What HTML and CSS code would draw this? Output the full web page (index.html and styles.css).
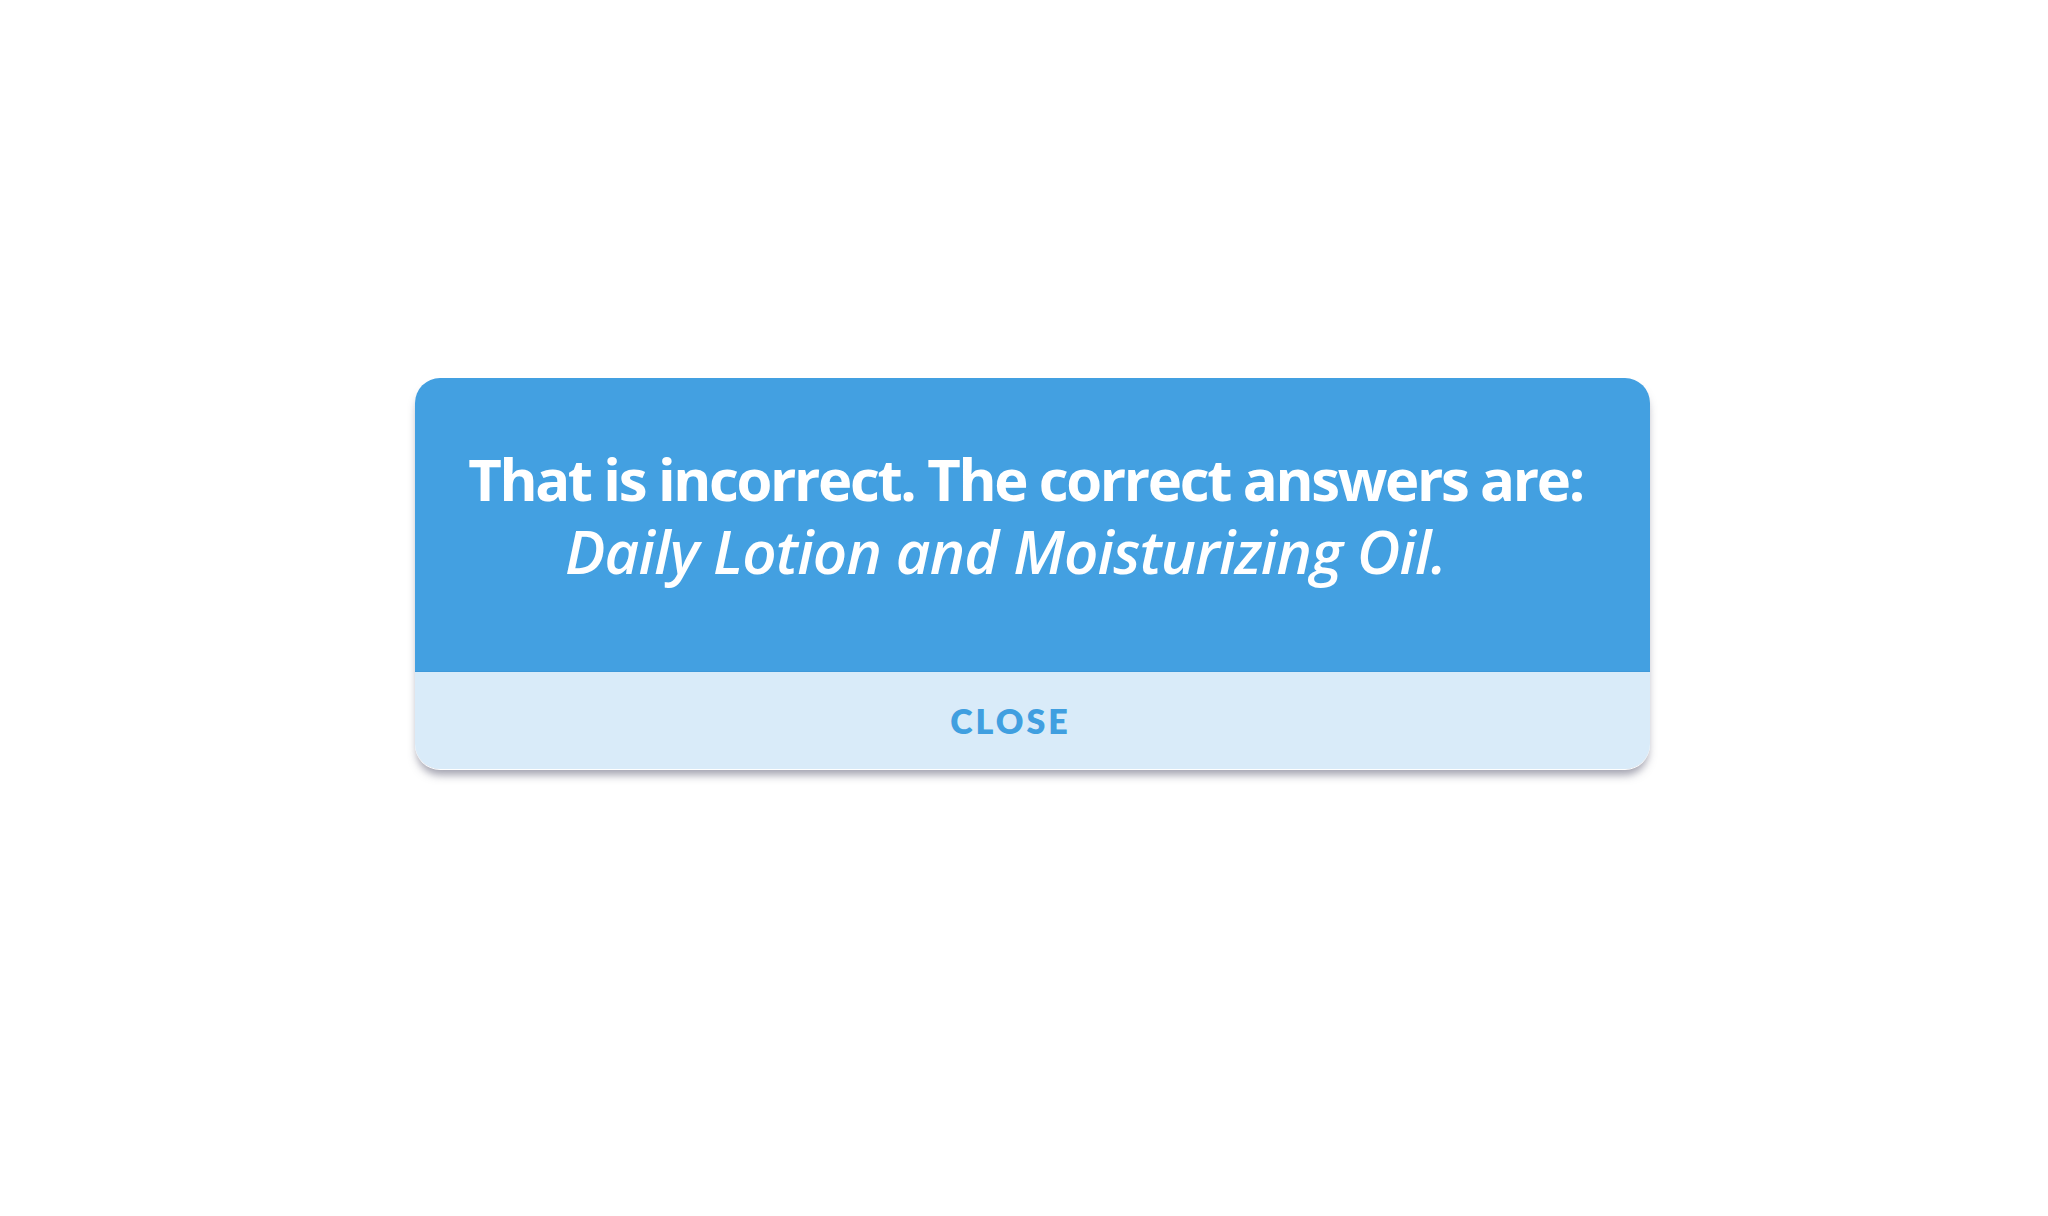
FILE: index.html
```html
<!DOCTYPE html>
<html lang="en">
<head>
<meta charset="utf-8">
<title>Feedback</title>
<link rel="stylesheet" href="styles.css">
</head>
<body>
<div class="stage">
  <div class="dialog" role="dialog">
    <div class="message">
      <p class="line bold">That is incorrect. The correct answers are:</p>
      <p class="line ital">Daily Lotion and Moisturizing Oil.</p>
    </div>
    <div class="footer">
      <button class="close" type="button">CLOSE</button>
    </div>
  </div>
</div>
</body>
</html>
```

FILE: styles.css
```css
html, body {
  margin: 0;
  padding: 0;
  background: #ffffff;
}
.stage {
  width: 2048px;
  height: 1216px;
  padding: 378px 0 0 415px;
  box-sizing: border-box;
}
.dialog {
  width: 1235px;
  border-radius: 25px;
  box-shadow: 0 1px 0 #ffffff, 0 8px 9px -2px rgba(70, 70, 95, 0.5);
  display: flex;
  flex-direction: column;
}
.message {
  height: 294px;
  background: #43a0e1;
  border-radius: 25px 25px 0 0;
  box-sizing: border-box;
  padding: 64px 14px 0 0;
  color: #ffffff;
  font-family: "Open Sans", sans-serif;
  text-align: center;
  border-bottom: 1px solid #3f99da;
}
.line {
  margin: 0;
  font-size: 60px;
  line-height: 73px;
  white-space: nowrap;
}
.bold {
  font-weight: 700;
  font-size: 58px;
  letter-spacing: -2.35px;
}
.ital {
  font-style: italic;
  font-weight: 550;
  letter-spacing: -0.85px;
  padding-right: 40px;
}
.footer {
  height: 97px;
  background: #d9ebf9;
  border-radius: 0 0 25px 25px;
  display: flex;
  align-items: center;
  justify-content: center;
  padding-right: 44px;
  box-sizing: border-box;
}
.close {
  border: 0;
  background: transparent;
  padding: 0;
  font-family: "Lato", sans-serif;
  font-weight: 800;
  font-size: 34px;
  letter-spacing: 3px;
  color: #409fe0;
  cursor: pointer;
}
```
